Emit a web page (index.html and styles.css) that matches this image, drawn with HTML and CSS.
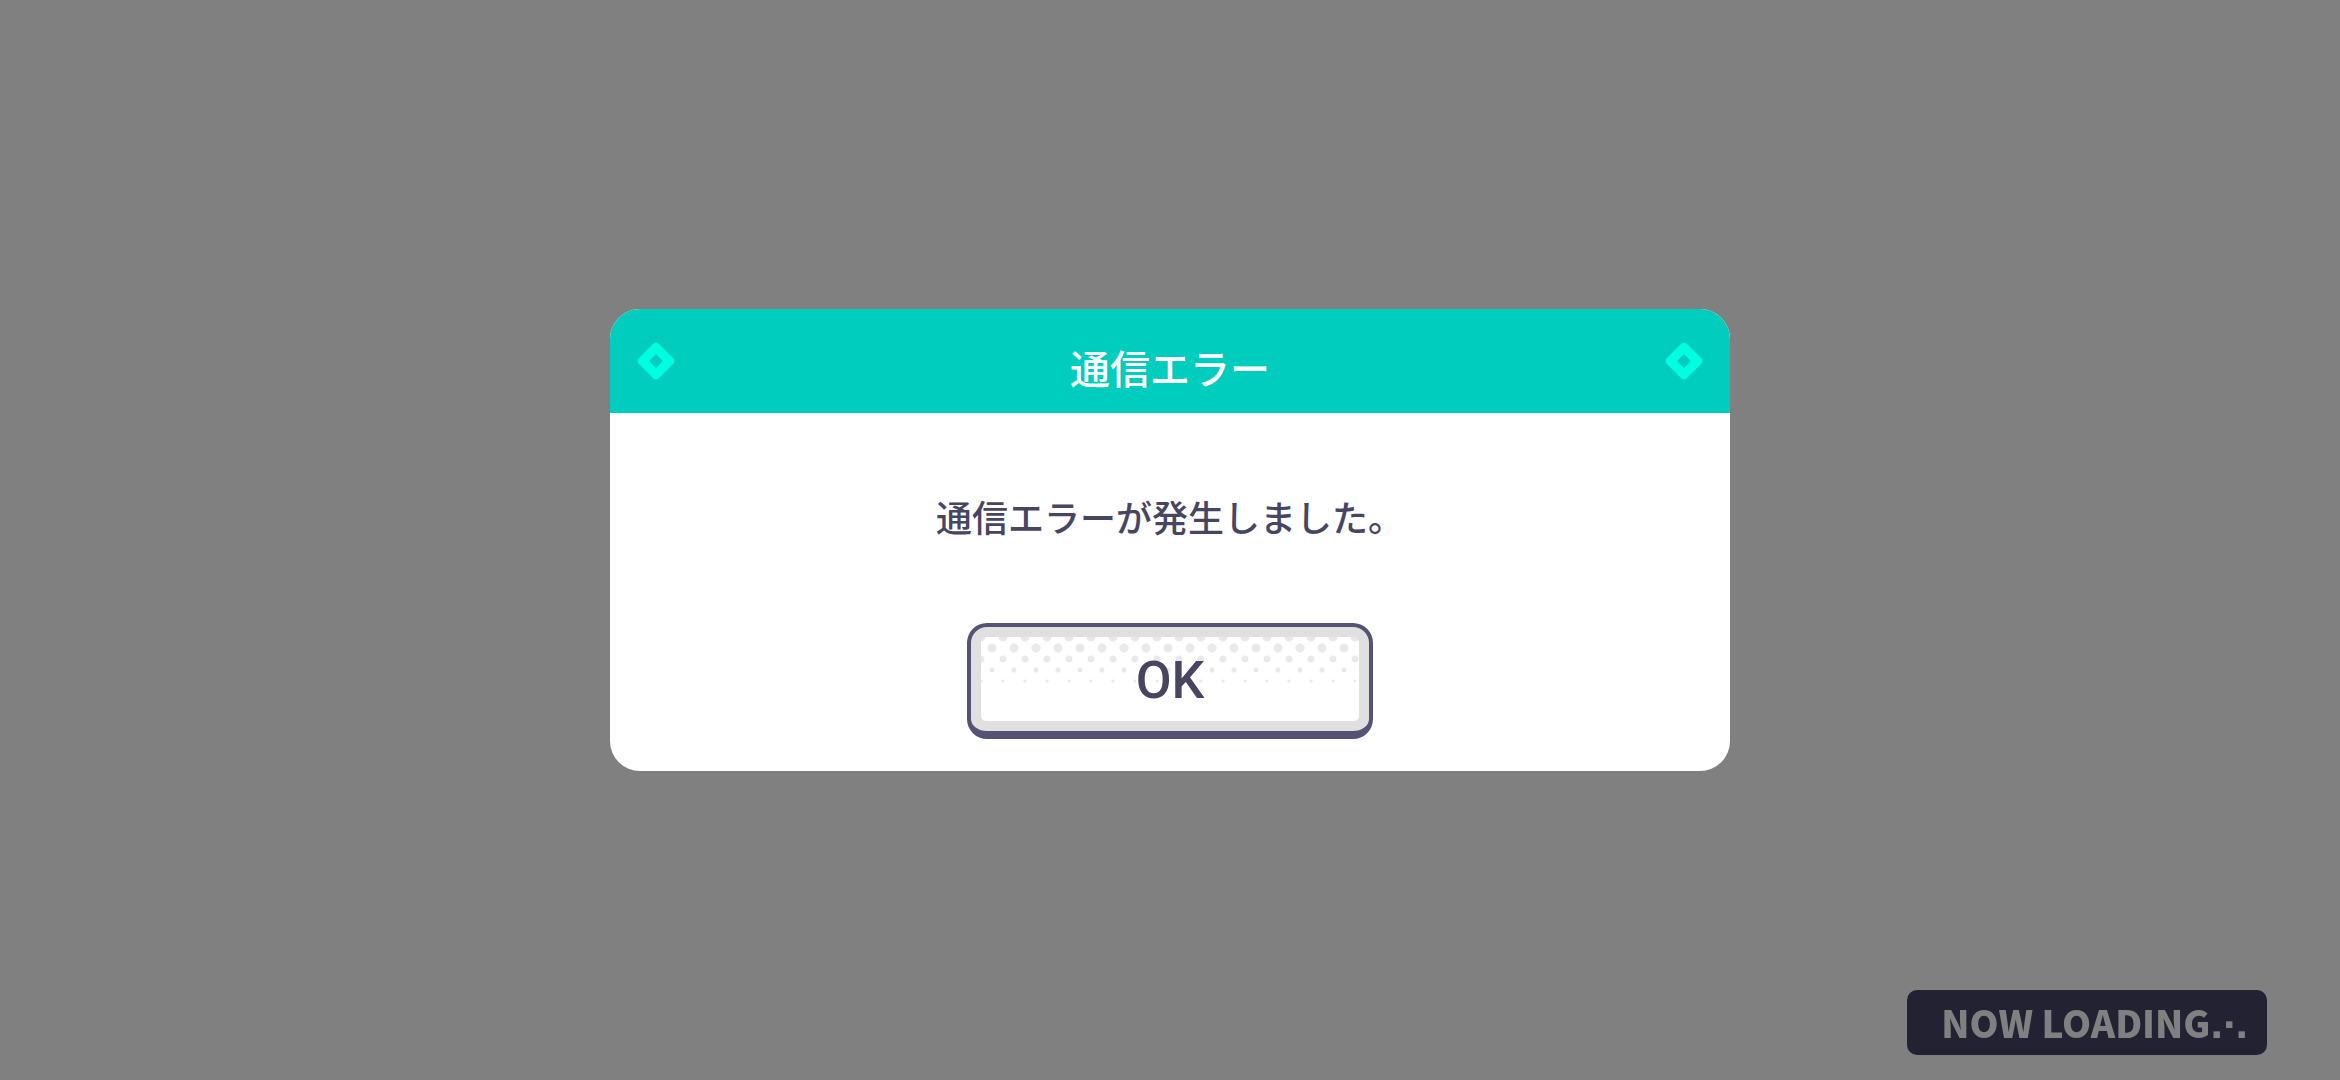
FILE: index.html
```
<!DOCTYPE html>
<html lang="ja">
<head>
    <meta charset="UTF-8">
    <meta name="viewport" content="width=device-width, initial-scale=1.0">
    <title>通信エラー</title>
    <link rel="stylesheet" href="styles.css">
</head>
<body>
    <main class="stage">
        <section class="dialog" role="alertdialog" aria-labelledby="dialog-title" aria-describedby="dialog-message">
            <header class="dialog-header">
                <svg class="diamond" viewBox="0 0 38 38" aria-hidden="true">
                    <path fill-rule="evenodd" d="M16 2Q19 -1 22 2L36 16Q39 19 36 22L22 36Q19 39 16 36L2 22Q-1 19 2 16ZM19 12L12 19L19 26L26 19Z"/>
                </svg>
                <h1 class="dialog-title" id="dialog-title">通信エラー</h1>
                <svg class="diamond" viewBox="0 0 38 38" aria-hidden="true">
                    <path fill-rule="evenodd" d="M16 2Q19 -1 22 2L36 16Q39 19 36 22L22 36Q19 39 16 36L2 22Q-1 19 2 16ZM19 12L12 19L19 26L26 19Z"/>
                </svg>
            </header>
            <div class="dialog-body">
                <p class="message" id="dialog-message">通信エラーが発生しました。</p>
                <button class="btn" type="button"><span class="btn-face">OK</span></button>
            </div>
        </section>
    </main>

    <div class="loading" role="status">NOW LOADING<span class="dots">.<span class="dot-up">.</span>.</span></div>
</body>
</html>
```
FILE: styles.css
```
* { box-sizing: border-box; }
body { margin: 0; background: #808080; color: #47455f; font-family: "Noto Sans CJK JP", sans-serif; }
.stage { display: flex; align-items: center; justify-content: center; min-height: 100vh; padding: 24px; }

/* dialog */
.dialog { width: 100%; max-width: 1120px; background: #fff; border-radius: 30px; overflow: hidden; }
.dialog-header { display: flex; align-items: center; justify-content: space-between; height: 104px; padding: 0 27px; background: #00cdbd; }
.dialog-title { margin: 0; padding-top: 12px; color: #fff; font-size: 40px; font-weight: 500; line-height: 60px; }
.diamond { width: 38px; height: 38px; fill: #00ffe0; }
.dialog-body { display: flex; flex-direction: column; align-items: center; padding: 76px 32px 32px; }
.message { margin: 0 0 80px; font-size: 36px; font-weight: 500; line-height: 54px; }

/* button */
.btn { width: 406px; max-width: 100%; padding: 0; background: #e0e0e0; border: 4px solid #555373; border-bottom-width: 8px; border-radius: 20px; color: inherit; cursor: pointer; }
.btn-face {
    display: block;
    margin: 10px;
    padding-top: 4px;
    border-radius: 5px;
    font: 500 52px/80px Roboto, sans-serif;
    /* halftone rows, each one smaller than the row above */
    background:
        radial-gradient(circle, #e9e9e9 4px, transparent 5px) -11px -11px / 22px 22px repeat-x,
        radial-gradient(circle, #e9e9e9 4px, transparent 5px) 0 0 / 22px 22px repeat-x,
        radial-gradient(circle, #e9e9e9 3px, transparent 4px) -11px 11px / 22px 22px repeat-x,
        radial-gradient(circle, #e9e9e9 2px, transparent 3px) 0 22px / 22px 22px repeat-x,
        radial-gradient(circle, #e9e9e9 1px, transparent 2px) -11px 33px / 22px 22px repeat-x,
        #fff;
}

/* loading badge */
.loading { position: fixed; right: 73px; bottom: 25px; padding: 0 19px 0 34px; background: #232233; border-radius: 10px; color: #808080; font-size: 37px; font-weight: 900; line-height: 65px; }
.dots { font: 700 45px/1px "Liberation Sans", sans-serif; }
.dot-up { vertical-align: 10px; }
```
